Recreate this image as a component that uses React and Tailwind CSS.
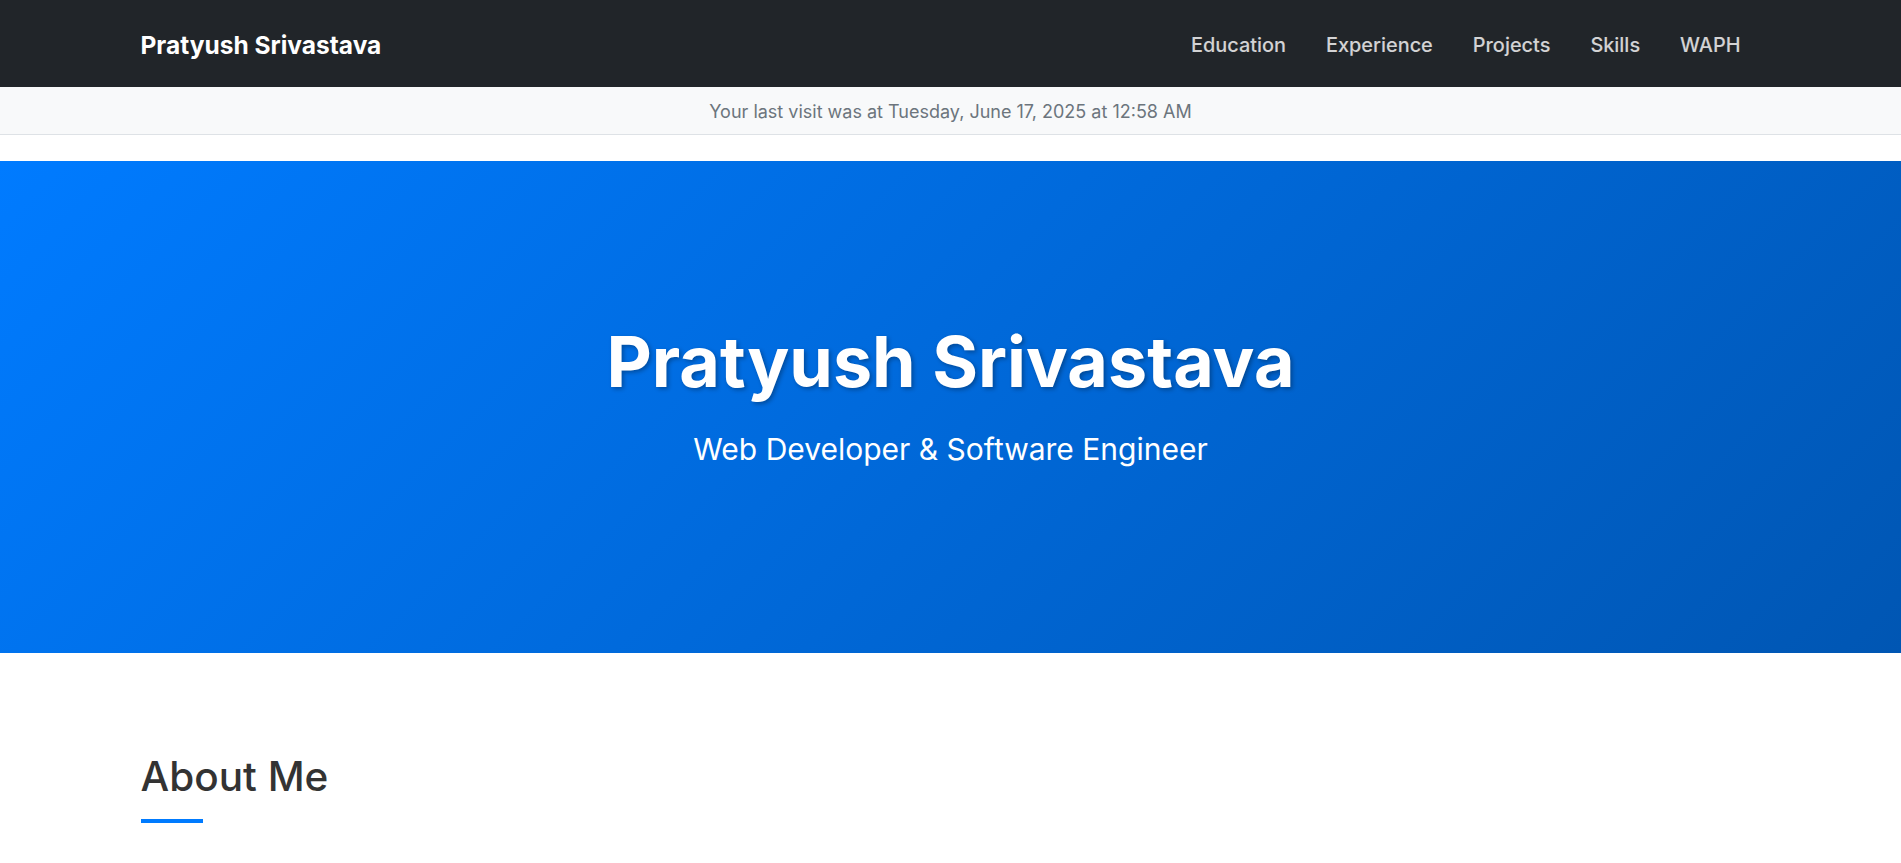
import React from "react";

export default function App() {
  const font = { fontFamily: "Inter, 'Noto Sans', sans-serif" };
  return (
    <div className="min-h-screen bg-white" style={font}>
      <nav className="bg-[#212529] h-[87px]">
        <div className="mx-auto w-[1620px] h-full flex items-center justify-between pt-[4px]">
          <a className="text-white text-[24.5px] font-bold">Pratyush Srivastava</a>
          <ul className="flex items-center">
            {["Education", "Experience", "Projects", "Skills", "WAPH"].map((l) => (
              <li key={l}>
                <a className="block px-[20px] text-[19.9px] font-medium text-white/80">{l}</a>
              </li>
            ))}
          </ul>
        </div>
      </nav>
      <div className="bg-[#f8f9fa] border-b border-[#dee2e6] h-[48px] flex items-center justify-center">
        <p className="text-[#6c757d] text-[18px] pt-[1px]">Your last visit was at Tuesday, June 17, 2025 at 12:58 AM</p>
      </div>
      <section className="mt-[26px] h-[492px] bg-[linear-gradient(135deg,#007bff_0%,#0056b3_100%)] flex flex-col items-center justify-center text-white">
        <h1 className="text-[70px] leading-[1.2] font-bold [text-shadow:2px_2px_4px_rgba(0,0,0,0.3)] mt-[-22px]">Pratyush Srivastava</h1>
        <p className="mt-[23px] text-[30px] leading-[1.5]">Web Developer &amp; Software Engineer</p>
      </section>
      <section className="mx-auto w-[1620px] pt-[100px]">
        <h2 className="text-[40.5px] font-medium text-[#333] leading-[1.2]">About Me</h2>
        <div className="mt-[17px] w-[62px] h-[4px] bg-[#007bff]"></div>
      </section>
    </div>
  );
}
